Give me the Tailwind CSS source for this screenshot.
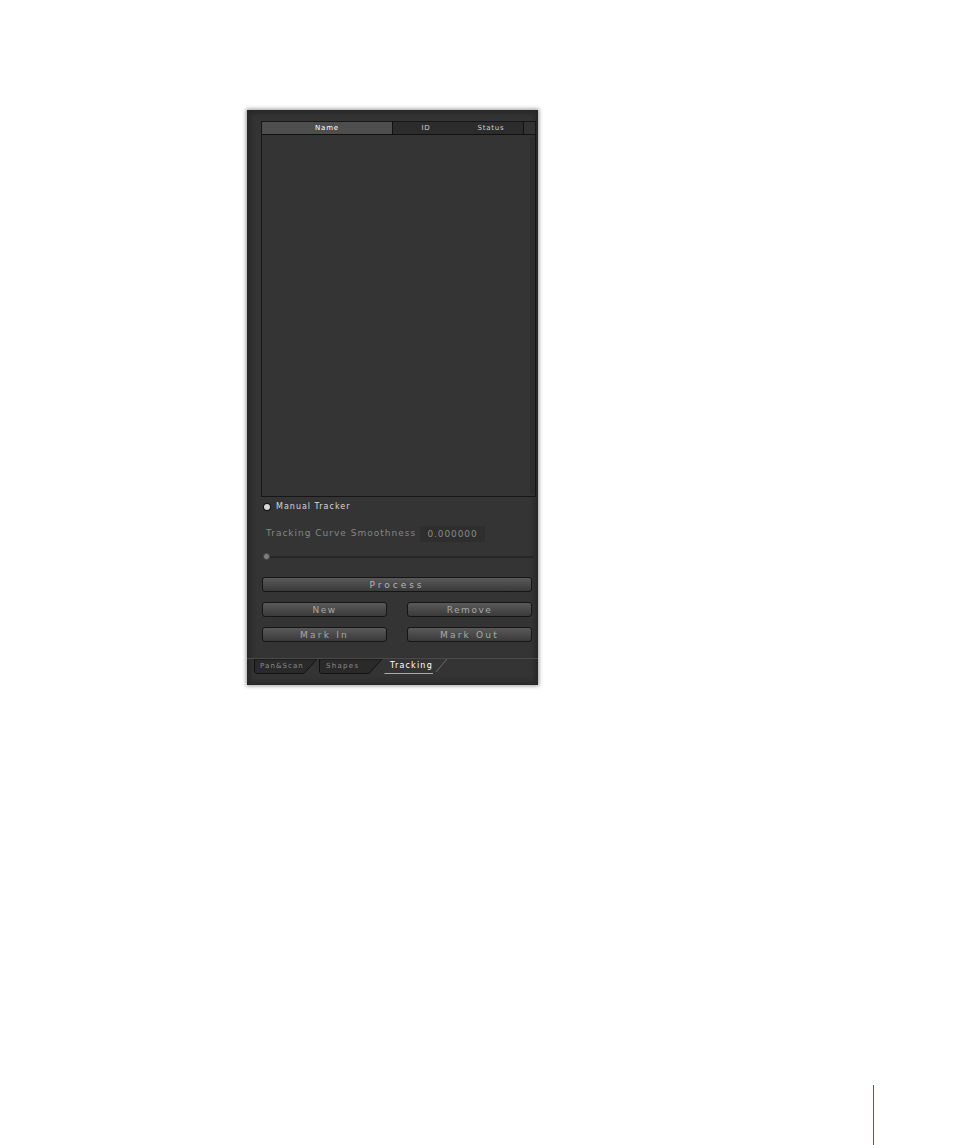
<!DOCTYPE html>
<html>
<head>
<meta charset="utf-8">
<script src="https://cdn.jsdelivr.net/npm/@tailwindcss/browser@4"></script>
</head>
<body class="bg-white">
<div class="relative w-[954px] h-[1145px] overflow-hidden bg-white pl-[247px] pt-[110px] font-['DejaVu_Sans',sans-serif] antialiased">
  <div class="w-[291px] h-[575px] shadow-[0_0_4px_1px_rgba(0,0,0,0.4),inset_0_0_5px_3px_rgba(25,25,25,0.5)] flex flex-col bg-[#343434]">
    <div class="ml-[14px] mt-[11px] w-[275px] h-[376px] flex flex-col border border-[#161616] relative">
      <div class="flex h-[13px] border-b border-[#111] text-[7px] tracking-[0.8px] leading-[12px] text-center text-[#d0d0d0] bg-[#2c2c2c]">
        <div class="w-[131px] bg-[#4e4e4e] text-white border-r border-[#111]">Name</div>
        <div class="w-[66px]">ID</div>
        <div class="w-[65px] border-r border-[#111]">Status</div>
        <div class="flex-1 bg-[#333]"></div>
      </div>
      <div class="flex-1 flex justify-end pr-[1px] py-[2px]">
        <div class="w-[4px] h-full bg-[#2d2d2d]"></div>
      </div>
    </div>
    <div class="ml-[16px] mt-[5px] h-[10px] flex items-center gap-[6px]">
      <div class="w-[6px] h-[6px] ml-[1px] rounded-full bg-[#d8d8d8] shadow-[0_0_0_1px_#111]"></div>
      <span class="text-[8px] tracking-[1px] text-[#d8d8d8]">Manual Tracker</span>
    </div>
    <div class="ml-[19px] mt-[13px] h-[17px] flex items-center gap-[4px]">
      <span class="w-[150px] text-[9px] tracking-[1px] text-[#858585] whitespace-nowrap">Tracking Curve Smoothness</span>
      <div class="w-[65px] h-[16px] bg-[#2e2e2e] text-[9px] tracking-[0.9px] leading-[16px] text-center text-[#8a8a8a]">0.000000</div>
    </div>
    <div class="ml-[16px] mt-[11px] w-[271px] h-[7px] flex items-center relative">
      <div class="w-full h-[2px] bg-[#262626]"></div>
      <div class="absolute left-0 top-0 w-[7px] h-[7px] rounded-full bg-[#808080] border border-[#444]"></div>
    </div>
    <div class="ml-[15px] mt-[17px] w-[270px] flex flex-col">
      <div class="h-[15px] rounded-[3px] border border-[#151515] bg-gradient-to-b from-[#5a5a5a] to-[#3a3a3a] text-[9px] tracking-[3px] leading-[14px] text-center text-[#b5b5b5]">Process</div>
      <div class="mt-[10px] flex justify-between">
        <div class="w-[125px] h-[15px] rounded-[3px] border border-[#151515] bg-gradient-to-b from-[#5a5a5a] to-[#3a3a3a] text-[9px] tracking-[1.5px] leading-[14px] text-center text-[#a8a8a8]">New</div>
        <div class="w-[125px] h-[15px] rounded-[3px] border border-[#151515] bg-gradient-to-b from-[#5a5a5a] to-[#3a3a3a] text-[9px] tracking-[1.5px] leading-[14px] text-center text-[#a8a8a8]">Remove</div>
      </div>
      <div class="mt-[10px] flex justify-between">
        <div class="w-[125px] h-[15px] rounded-[3px] border border-[#151515] bg-gradient-to-b from-[#5a5a5a] to-[#3a3a3a] text-[9px] tracking-[2.2px] leading-[14px] text-center text-[#a8a8a8]">Mark In</div>
        <div class="w-[125px] h-[15px] rounded-[3px] border border-[#151515] bg-gradient-to-b from-[#5a5a5a] to-[#3a3a3a] text-[9px] tracking-[2.2px] leading-[14px] text-center text-[#a8a8a8]">Mark Out</div>
      </div>
    </div>
    <div class="mt-[16px] h-[17px] flex relative pl-[7px] gap-[1px] border-t border-[#4a4a4a]">
      <div class="relative w-[64px] h-[15px] text-[7px] tracking-[1.1px] leading-[14px] text-[#8a8a8a] pl-[6px]">
        <svg class="absolute left-0 top-0" width="64" height="15"><path d="M0.5 0 V13 L2 14.5 H50 L63 0 Z" fill="#2a2a2a" stroke="#111"/></svg>
        <span class="relative">Pan&amp;Scan</span>
      </div>
      <div class="relative w-[64px] h-[15px] text-[7px] tracking-[1.3px] leading-[14px] text-[#8a8a8a] pl-[7px]">
        <svg class="absolute left-0 top-0" width="64" height="15"><path d="M0.5 0 V13 L2 14.5 H50 L63 0 Z" fill="#2a2a2a" stroke="#111"/></svg>
        <span class="relative">Shapes</span>
      </div>
      <div class="relative w-[64px] h-[15px] text-[8px] tracking-[1.2px] leading-[14px] text-white pl-[6px]">
        <svg class="absolute left-0 top-0" width="64" height="15"><path d="M0.5 14.5 H49" fill="none" stroke="#ccc" stroke-width="0.8"/><path d="M52 13 L63 0" fill="none" stroke="#777" stroke-width="0.8"/></svg>
        <span class="relative">Tracking</span>
      </div>
    </div>
  </div>
  <div class="absolute left-[873px] top-[1085px] w-[1px] h-[60px] bg-[#2f6690]"></div>
</div>
</body>
</html>
